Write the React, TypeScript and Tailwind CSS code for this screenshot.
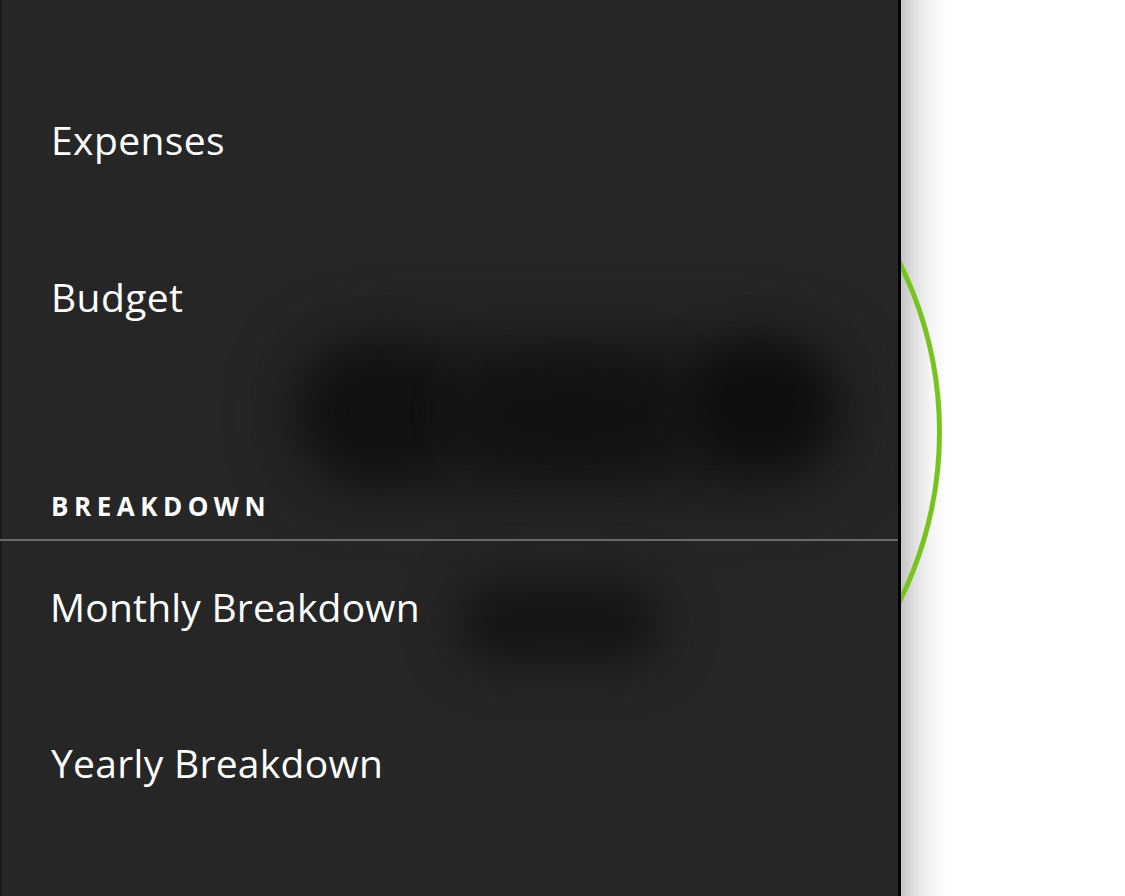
import React from "react";

const items1 = ["Expenses", "Budget"];

export default function App() {
  return (
    <div className="flex h-[896px] w-full overflow-hidden bg-white font-['Open_Sans',sans-serif]">
      {/* Drawer panel */}
      <aside className="relative flex h-full w-[901px] shrink-0 flex-col overflow-hidden border-r-[3px] border-black bg-[#262626] shadow-[inset_2px_0_0_#1a1a1a]">
        {/* blurred content showing through */}
        <div className="pointer-events-none absolute left-[290px] top-[335px] h-[160px] w-[560px] rounded-[80px] bg-[#1a1a1a] blur-[30px]" />
        <div className="pointer-events-none absolute left-[305px] top-[350px] h-[125px] w-[150px] rounded-full bg-[#111111] blur-[24px]" />
        <div className="pointer-events-none absolute left-[465px] top-[360px] h-[110px] w-[210px] rounded-full bg-[#121212] blur-[24px]" />
        <div className="pointer-events-none absolute left-[690px] top-[345px] h-[120px] w-[140px] rounded-full bg-[#0e0e0e] blur-[22px]" />
        <div className="pointer-events-none absolute left-[455px] top-[578px] h-[88px] w-[210px] rounded-full bg-[#151515] blur-[24px]" />

        <div className="relative flex flex-col pt-[120px]">
          <div className="h-[39px] pl-[51px] text-[39px] leading-none tracking-[0.4px] text-white">{items1[0]}</div>
          <div className="mt-[118px] h-[39px] pl-[51px] text-[39px] leading-none tracking-[0.4px] text-white">{items1[1]}</div>
          <div className="mt-[177px] h-[26px] pl-[51px] text-[26px] font-bold leading-none tracking-[5.5px] text-white">
            BREAKDOWN
          </div>
          <div className="mt-[20px] h-[2px] w-full bg-[#6a6a6a]" />
          <div className="mt-[46px] h-[39px] pl-[50px] text-[39px] leading-none tracking-[0.2px] text-white">Monthly Breakdown</div>
          <div className="mt-[117px] h-[39px] pl-[51px] text-[39px] leading-none tracking-[0.3px] text-white">Yearly Breakdown</div>
        </div>
      </aside>

      {/* Main content (partly hidden under drawer) */}
      <main className="relative h-full flex-1 overflow-hidden bg-white">
        <div className="absolute inset-y-0 left-0 w-[48px] bg-[linear-gradient(to_right,#c3c3c3,#e2e2e2_30%,#f6f6f6_65%,#ffffff)]" />
        <div className="absolute left-[-721px] top-[51px] h-[762px] w-[762px] rounded-full border-[5px] border-[#79c320]" />
      </main>
    </div>
  );
}
